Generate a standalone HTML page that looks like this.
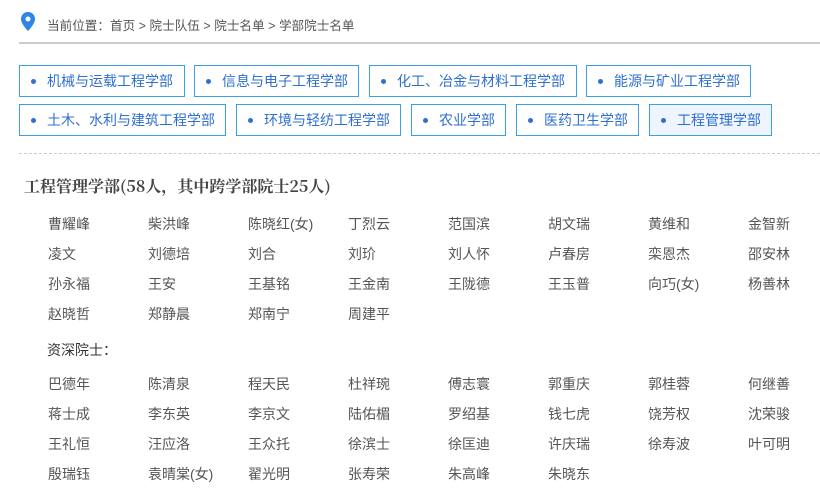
<!DOCTYPE html>
<html><head><meta charset="utf-8"><style>
body{margin:0;width:820px;height:502px;background:#fff;font-family:"Liberation Sans","Noto Sans CJK SC",sans-serif;position:relative;overflow:hidden}
.a{position:absolute;white-space:nowrap}
.crumb{left:47px;top:15px;font-size:12.6px;color:#555}
.line{left:19px;top:42px;width:801px;height:2px;background:#ccc}
.btn{position:absolute;border:1px solid #3b9ee6;box-sizing:border-box;height:32px;color:#2e6fd0;font-size:14px;line-height:30px;padding-left:27px}
.btn:before{content:"";position:absolute;left:11px;top:13px;width:5px;height:5px;border-radius:50%;background:#2e6fd0}
.on{background:#eef5fe}
.dash{left:19px;top:153px;width:801px;border-top:1px dashed #ccc}
.h{left:24px;top:174px;font-size:16px;font-weight:bold;color:#444;font-family:"Noto Serif CJK SC","Liberation Serif",serif}
.n{position:absolute;font-size:14px;color:#555}
</style></head><body>
<svg class="a" style="left:21px;top:12px" width="14" height="19" viewBox="0 0 14 19"><path d="M7 0C3 0 0 3 0 7c0 5 7 12 7 12s7-7 7-12C14 3 11 0 7 0z" fill="#2d86e8"/><circle cx="7" cy="7" r="2.5" fill="#fff"/></svg>
<div class="a crumb">当前位置：首页 &gt; 院士队伍 &gt; 院士名单 &gt; 学部院士名单</div>
<div class="a line"></div>
<div class="btn" style="left:19px;top:65px;width:166px">机械与运载工程学部</div>
<div class="btn" style="left:194px;top:65px;width:165px">信息与电子工程学部</div>
<div class="btn" style="left:369px;top:65px;width:208px">化工、冶金与材料工程学部</div>
<div class="btn" style="left:586px;top:65px;width:165px">能源与矿业工程学部</div>
<div class="btn" style="left:19px;top:104px;width:207px">土木、水利与建筑工程学部</div>
<div class="btn" style="left:236px;top:104px;width:165px">环境与轻纺工程学部</div>
<div class="btn" style="left:411px;top:104px;width:95px">农业学部</div>
<div class="btn" style="left:516px;top:104px;width:123px">医药卫生学部</div>
<div class="btn on" style="left:649px;top:104px;width:123px">工程管理学部</div>
<div class="a dash"></div>
<div class="a h">工程管理学部(58人，其中跨学部院士25人)</div>
<div id="g"></div>
<div class="n" style="left:47px;top:340px;color:#333">资深院士：</div>
<script>
var a=[["曹耀峰","柴洪峰","陈晓红(女)","丁烈云","范国滨","胡文瑞","黄维和","金智新"],["凌文","刘德培","刘合","刘玠","刘人怀","卢春房","栾恩杰","邵安林"],["孙永福","王安","王基铭","王金南","王陇德","王玉普","向巧(女)","杨善林"],["赵晓哲","郑静晨","郑南宁","周建平"]];
var b=[["巴德年","陈清泉","程天民","杜祥琬","傅志寰","郭重庆","郭桂蓉","何继善"],["蒋士成","李东英","李京文","陆佑楣","罗绍基","钱七虎","饶芳权","沈荣骏"],["王礼恒","汪应洛","王众托","徐滨士","徐匡迪","许庆瑞","徐寿波","叶可明"],["殷瑞钰","袁晴棠(女)","翟光明","张寿荣","朱高峰","朱晓东"]];
var h="";
function f(d,y0){d.forEach(function(r,i){r.forEach(function(s,j){h+='<div class="n" style="left:'+(48+j*100)+'px;top:'+(y0+i*30)+'px">'+s+'</div>';});});}
f(a,214);f(b,374);
document.getElementById("g").innerHTML=h;
</script>
</body></html>
